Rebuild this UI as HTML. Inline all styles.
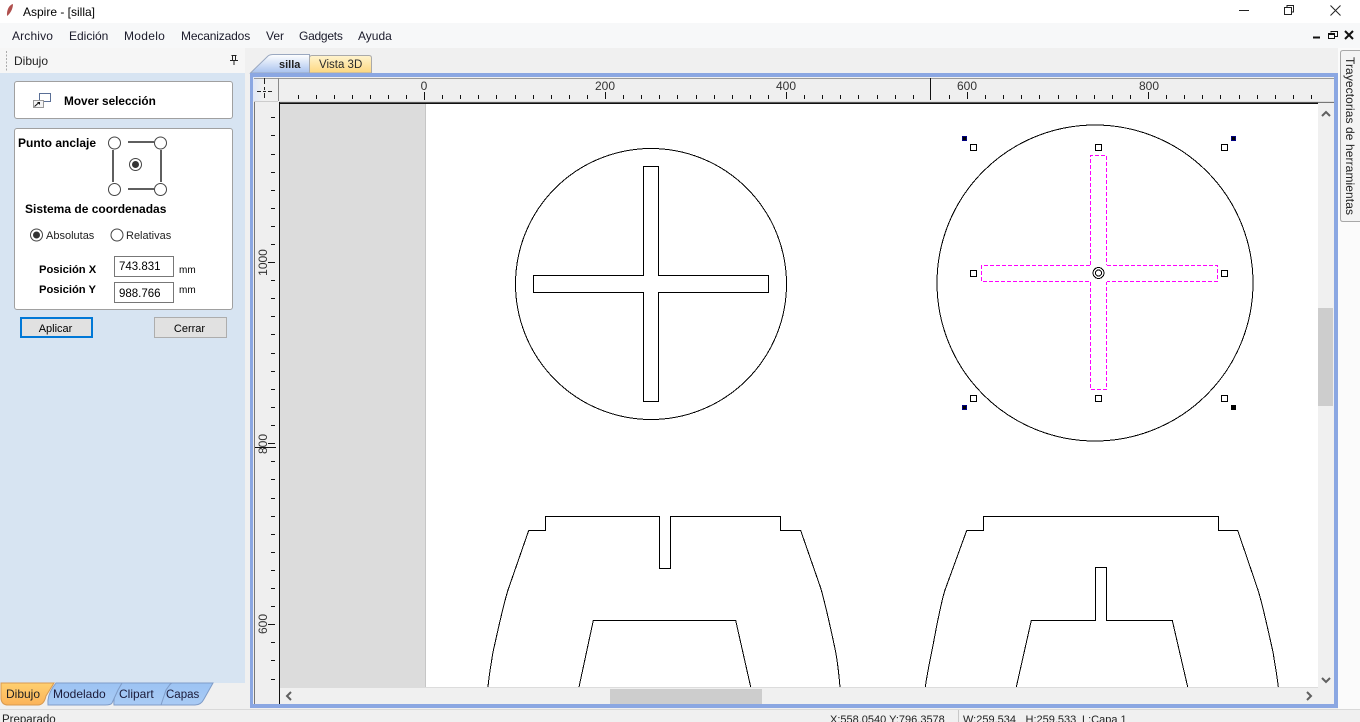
<!DOCTYPE html>
<html><head><meta charset="utf-8"><style>
html,body{margin:0;padding:0;width:1360px;height:722px;overflow:hidden;background:#f0f0f0;font-family:"Liberation Sans",sans-serif;font-size:12px;color:#000}
.a{position:absolute;white-space:nowrap}
.m{top:29px;color:#1a1a2a}
.box{background:#fff;border:1px solid #a0a0a0;border-radius:3px;box-sizing:border-box}
.b{font-weight:bold}
.inp{background:#fff;border:1px solid #777;box-sizing:border-box;width:60px;height:21px;padding:4px 0 0 4px;font-size:11.5px}
.btn{box-sizing:border-box;background:#e1e1e1;text-align:center;height:21px;line-height:19px;width:73px;font-size:11px;padding:1px 2px 0 0}
</style></head><body>
<div class="a" style="left:0;top:0;width:1360px;height:23px;background:#fff"></div>
<div class="a" style="left:23px;top:5px">Aspire - [silla]</div>
<div class="a" style="left:0;top:23px;width:1360px;height:25px;background:#f7f8f9"></div>
<div class="a m" style="left:12px;letter-spacing:.15px">Archivo</div>
<div class="a m" style="left:69px">Edición</div>
<div class="a m" style="left:124px;letter-spacing:.3px">Modelo</div>
<div class="a m" style="left:181px;letter-spacing:-.15px">Mecanizados</div>
<div class="a m" style="left:266px">Ver</div>
<div class="a m" style="left:299px;letter-spacing:-.25px">Gadgets</div>
<div class="a m" style="left:358px">Ayuda</div>

<div class="a" style="left:0;top:48px;width:245px;height:25px;background:#f6f6f6"></div>
<div class="a" style="left:14px;top:54px;color:#222">Dibujo</div>
<div class="a" style="left:0;top:73px;width:245px;height:610px;background:#d7e4f2"></div>

<div class="a box" style="left:14px;top:81px;width:219px;height:38px"></div>
<div class="a b" style="left:64px;top:94px;font-size:11.8px;line-height:15px">Mover selección</div>
<div class="a box" style="left:14px;top:128px;width:219px;height:182px"></div>
<div class="a b" style="left:18px;top:136px;font-size:12px;line-height:15px">Punto anclaje</div>
<div class="a b" style="left:25px;top:202px;font-size:12px;line-height:15px">Sistema de coordenadas</div>
<div class="a" style="left:46px;top:230px;font-size:11px;line-height:13px;color:#222">Absolutas</div>
<div class="a" style="left:126px;top:230px;font-size:11px;line-height:13px;color:#222">Relativas</div>
<div class="a b" style="left:39px;top:263px;font-size:11.2px;line-height:15px">Posición X</div>
<div class="a b" style="left:39px;top:283px;font-size:11.2px;line-height:15px">Posición Y</div>
<div class="a inp" style="left:114px;top:256px">743.831</div>
<div class="a inp" style="left:114px;top:282px;padding-top:5px">988.766</div>
<div class="a" style="left:179px;top:265px;font-size:10px">mm</div>
<div class="a" style="left:179px;top:285px;font-size:10px">mm</div>
<div class="a btn" style="left:20px;top:317px;border:2px solid #0078d7">Aplicar</div>
<div class="a btn" style="left:154px;top:317px;border:1px solid #adadad;line-height:20px">Cerrar</div>

<svg class="a" style="left:0;top:0" width="1360" height="722" viewBox="0 0 1360 722" xmlns="http://www.w3.org/2000/svg" font-family="Liberation Sans, sans-serif" font-size="12">
<defs>
<linearGradient id="gs" x1="0" y1="0" x2="0" y2="1"><stop offset="0" stop-color="#fff"/><stop offset="1" stop-color="#a9c2ee"/></linearGradient>
<linearGradient id="gy" x1="0" y1="0" x2="0" y2="1"><stop offset="0" stop-color="#fff4cf"/><stop offset="1" stop-color="#fdd77f"/></linearGradient>
<linearGradient id="go" x1="0" y1="0" x2="0" y2="1"><stop offset="0" stop-color="#ffd070"/><stop offset="1" stop-color="#fbb35a"/></linearGradient>
<linearGradient id="gb" x1="0" y1="0" x2="0" y2="1"><stop offset="0" stop-color="#9cc3f3"/><stop offset="1" stop-color="#a9cbf5"/></linearGradient>
<linearGradient id="gc" x1="0" y1="0" x2="1" y2="0"><stop offset="0" stop-color="#dfe7f6"/><stop offset=".4" stop-color="#f0f0f0"/></linearGradient>
</defs>
<!-- title icon -->
<path d="M13 4C9 5 6.500 10 7 16C10 14 13 9 13 4Z" fill="#b0504e"/>
<!-- window controls -->
<g fill="none" stroke="#222" stroke-width="1" shape-rendering="crispEdges">
<path d="M1239 10.500H1249"/>
<rect x="1284.500" y="7.500" width="7" height="7"/><path d="M1287 7V5.500H1293.500V12H1292"/>
</g>
<path d="M1330.500 5.500L1340.500 15.500M1340.500 5.500L1330.500 15.500" stroke="#222" fill="none"/>
<g fill="none" stroke="#111" shape-rendering="crispEdges">
<path d="M1313 37.500H1320" stroke-width="2"/>
<rect x="1328.500" y="33.500" width="6" height="5"/><path d="M1328 34.500H1335" />
<path d="M1331 32.500V31.500H1337.500V36.500H1335" />
</g>
<path d="M1345 31L1353 39M1353 31L1345 39" stroke="#111" stroke-width="2" fill="none"/>
<!-- grip + pin -->
<path d="M6.500 51V71" stroke="#aaa" stroke-dasharray="2 1.500" shape-rendering="crispEdges"/>
<path d="M231.500 55.500H236.500M232.500 55.500V60.500M235.500 55.500V60.500M230 60.500H238M234 61V65" fill="none" stroke="#222" shape-rendering="crispEdges"/>

<!-- move icon -->
<rect x="39.500" y="93.500" width="11" height="8" fill="#fff" stroke="#5a6f96"/>
<rect x="33.500" y="100.500" width="10" height="7" fill="#f4f4f4" stroke="#999"/>
<path d="M34.500 106.500L39 102.500" stroke="#111"/><path d="M37 102H40V105Z" fill="#111"/>

<!-- anchor graphic -->
<g fill="none" stroke="#5f5f5f" stroke-width="2" shape-rendering="crispEdges">
<path d="M128 142H154M128 189H154M113 150V182M161 150V182"/>
</g>
<g fill="#fff" stroke="#444">
<circle cx="114.500" cy="143" r="6"/><circle cx="160.500" cy="143" r="6"/><circle cx="114.500" cy="189.500" r="6"/><circle cx="160.500" cy="189.500" r="6"/>
<circle cx="135.500" cy="164.500" r="6"/><circle cx="36.500" cy="235" r="6"/><circle cx="117" cy="235" r="6"/>
</g>
<circle cx="135.500" cy="164.500" r="3.500" fill="#333"/><circle cx="36.500" cy="235" r="3.500" fill="#333"/>

<!-- bottom tabs -->
<path d="M160 705Q160 696 166 687L172 683H213L204 699Q201 705 195 705Z" fill="url(#gb)" stroke="#7f9cc8"/>
<path d="M114 705Q113 696 119 687L122 683H171L166 690L161 705Z" fill="url(#gb)" stroke="#7f9cc8"/>
<path d="M48 705Q47 696 53 687L56 683H122L118 690L112 703Q111 705 105 705Z" fill="url(#gb)" stroke="#7f9cc8"/>
<path d="M1 683H54L46 696Q44 705 38 705H8Q2 705 1 699Z" fill="url(#go)" stroke="#d89a50"/>
<text x="6" y="698" fill="#222">Dibujo</text>
<text x="53" y="698" fill="#1b1b3a">Modelado</text>
<text x="119" y="698" fill="#1b1b3a">Clipart</text>
<text x="166" y="698" fill="#1b1b3a" font-size="11.500">Capas</text>

<!-- doc tabs -->
<path d="M250.500 73L268 56Q270 54.500 273 54.500H309.500V73Z" fill="url(#gs)" stroke="#9aa8c0"/>
<path d="M309.500 73V58Q309.500 55.500 312 55.500H369Q371.500 55.500 371.500 58V73Z" fill="url(#gy)" stroke="#aaa"/>
<text x="279" y="68" font-weight="bold" font-size="11" fill="#222">silla</text>
<text x="319" y="68" fill="#2a2a2a" font-size="11.500">Vista 3D</text>

<!-- frame -->
<rect x="250" y="73" width="1088" height="635" fill="#8ba7e2"/>
<rect x="253" y="77" width="1081" height="627" fill="#efefef"/>
<rect x="253" y="77" width="25" height="24" fill="url(#gc)"/>
<rect x="254" y="78" width="1080" height="1" fill="#9a9a9a" shape-rendering="crispEdges"/>
<rect x="278" y="78" width="1" height="23" fill="#8a8a8a"/>
<rect x="254" y="102" width="1" height="602" fill="#777"/>
<rect x="254" y="101" width="24" height="1" fill="#ccc"/>
<rect x="279" y="101" width="1055" height="1" fill="#ddd"/>
<!-- canvas -->
<rect x="279" y="103" width="1039" height="585" fill="#fff"/>
<rect x="280" y="104" width="146" height="584" fill="#dcdcdc"/>
<rect x="425" y="104" width="1" height="584" fill="#c6c6c6"/>
<rect x="279" y="102" width="1039" height="1" fill="#555"/>
<rect x="279" y="103" width="1039" height="1" fill="#111"/>
<rect x="1318" y="102" width="16" height="1" fill="#777"/>
<rect x="279" y="102" width="1" height="602" fill="#111"/>
<rect x="280" y="688" width="1038" height="16" fill="#f0f0f0"/>
<rect x="280" y="687" width="1038" height="1" fill="#dcdcdc"/>
<rect x="1318" y="104" width="16" height="600" fill="#f0f0f0"/>
<rect x="1318" y="308" width="15" height="98" fill="#cdcdcd"/>
<rect x="610" y="689" width="152" height="15" fill="#cdcdcd"/>
<g fill="none" stroke="#606060" stroke-width="2">
<path d="M1322 116L1326 112L1330 116M1322 678L1326 682L1330 678M291 692L287 696L291 700M1307 692L1311 696L1307 700"/>
</g>
<!-- corner crosshair -->
<path d="M264.500 78V84M264.500 87V90M264.500 93V98M257 91.500H261M263 91.500H266M268 91.500H272" stroke="#222" fill="none" shape-rendering="crispEdges"/>

<!-- ruler ticks -->
<g stroke="#111" fill="none" shape-rendering="crispEdges">
<path d="M298.500 95v4M316.500 95v4M334.500 95v4M352.500 95v4M370.500 95v4M388.500 95v4M406.500 95v4M442.500 95v4M460.500 95v4M478.500 95v4M496.500 95v4M515.500 95v4M533.500 95v4M551.500 95v4M569.500 95v4M587.500 95v4M623.500 95v4M641.500 95v4M659.500 95v4M677.500 95v4M696.500 95v4M714.500 95v4M732.500 95v4M750.500 95v4M768.500 95v4M804.500 95v4M822.500 95v4M840.500 95v4M858.500 95v4M877.500 95v4M895.500 95v4M913.500 95v4M949.500 95v4M985.500 95v4M1003.500 95v4M1021.500 95v4M1039.500 95v4M1058.500 95v4M1076.500 95v4M1094.500 95v4M1112.500 95v4M1130.500 95v4M1166.500 95v4M1184.500 95v4M1202.500 95v4M1220.500 95v4M1239.500 95v4M1257.500 95v4M1275.500 95v4M1293.500 95v4M1311.500 95v4"/>
<path d="M424.500 92v8M605.500 92v7M786.500 92v7M967.500 92v7M1148.500 92v7M930.500 78v22"/>
<path d="M271 117.500h4M271 135.500h4M271 154.500h4M271 172.500h4M271 190.500h4M271 208.500h4M271 226.500h4M271 244.500h4M271 280.500h4M271 298.500h4M271 316.500h4M271 334.500h4M271 353.500h4M271 371.500h4M271 389.500h4M271 407.500h4M271 425.500h4M271 461.500h4M271 479.500h4M271 498.500h4M271 516.500h4M271 534.500h4M271 552.500h4M271 570.500h4M271 588.500h4M271 606.500h4M271 642.500h4M271 660.500h4M271 679.500h4"/>
<path d="M268 262.500h7M268 443.500h7M268 624.500h7M255 447.500h21"/>
</g>
<g fill="#333" text-anchor="middle" font-size="12">
<text x="424" y="90">0</text><text x="605" y="90">200</text><text x="786" y="90">400</text><text x="967" y="90">600</text><text x="1149" y="90">800</text>
<text transform="translate(267 262.500) rotate(-90)">1000</text>
<text transform="translate(267 444) rotate(-90)">800</text>
<text transform="translate(267 624) rotate(-90)">600</text>
</g>

<!-- drawing -->
<g fill="none" stroke="#000" stroke-width="1" shape-rendering="crispEdges">
<circle cx="651" cy="284" r="135.500"/>
<path d="M643.500 166.500H658.500V275.500H768.500V292.500H658.500V401.500H643.500V292.500H533.500V275.500H643.500Z"/>
<circle cx="1095" cy="283" r="158"/>
<path d="M488 687C489 675 491 665 493 652C498 630 503 606 508 590L528.700 530.500H545.500V516.500H659.500V568.500H670.500V516.500H780.500V530.500H800.700L820.700 588C826 606 831 630 835.700 652C838 665 839 675 840 687"/>
<path d="M579 687L593.300 620.500H735.700L750.700 687"/>
<path d="M925.300 687C927 675 929 665 931.700 652C936 630 940 606 945 590L966.700 530.500H983.500V516.500H1218.500V530.500H1237.700L1258 590C1263 606 1268 630 1273 652C1275 665 1277 675 1278.300 687"/>
<path d="M1016.300 687L1031.300 620.500H1095.500V567.500H1106.500V620.500H1172.300L1187.700 687"/>
</g>
<g fill="none" stroke="#f0f" stroke-dasharray="4 2" shape-rendering="crispEdges">
<path d="M1090.500 265V155.500H1106.500V265"/>
<path d="M1090.500 282V389.500H1106.500V282"/>
<path d="M1090 265.500H981.500V281.500H1090"/>
<path d="M1107 265.500H1217.500V281.500H1107"/>
</g>
<g fill="none" stroke="#000" shape-rendering="crispEdges">
<circle cx="1098.500" cy="273" r="5.500"/><circle cx="1098.500" cy="273" r="3"/>
</g>
<g fill="#fff" stroke="#000" shape-rendering="crispEdges">
<rect x="970.500" y="144.500" width="6" height="6"/><rect x="1095.500" y="144.500" width="6" height="6"/><rect x="1221.500" y="144.500" width="6" height="6"/>
<rect x="970.500" y="270.500" width="6" height="6"/><rect x="1221.500" y="270.500" width="6" height="6"/>
<rect x="970.500" y="395.500" width="6" height="6"/><rect x="1095.500" y="395.500" width="6" height="6"/><rect x="1221.500" y="395.500" width="6" height="6"/>
</g>
<g fill="#000080" shape-rendering="crispEdges">
<rect x="962" y="136" width="5" height="5"/><rect x="1231" y="136" width="5" height="5"/><rect x="962" y="405" width="5" height="5"/>
</g>
<g fill="#000" shape-rendering="crispEdges">
<rect x="963" y="137" width="3" height="3"/><rect x="1232" y="137" width="3" height="3"/><rect x="963" y="406" width="3" height="3"/><rect x="1231" y="405" width="5" height="5"/>
</g>

<!-- right vertical tab -->
<rect x="1338" y="48" width="22" height="661" fill="#fbfbfb"/>
<path d="M1360 50.500H1343Q1340.500 50.500 1340.500 53V219Q1340.500 221.500 1343 221.500H1360" fill="#f4f4f4" stroke="#a8a8a8"/>
<text transform="translate(1346 57) rotate(90)" font-size="12" fill="#222" textLength="158" lengthAdjust="spacing">Trayectorias de herramientas</text>

<!-- status bar -->
<rect x="0" y="709" width="1360" height="1" fill="#d9d9d9"/>
<rect x="958" y="710" width="1" height="12" fill="#c8c8c8"/>
<text x="2" y="723" fill="#222" font-size="11.500">Preparado</text>
<text x="830" y="723" fill="#222" font-size="11">X:558.0540 Y:796.3578</text>
<text x="963" y="723" fill="#222" font-size="11">W:259.534</text>
<text x="1025.500" y="723" fill="#222" font-size="11">H:259.533</text>
<text x="1082" y="723" fill="#222" font-size="11">L:Capa 1</text>
</svg>
</body></html>
